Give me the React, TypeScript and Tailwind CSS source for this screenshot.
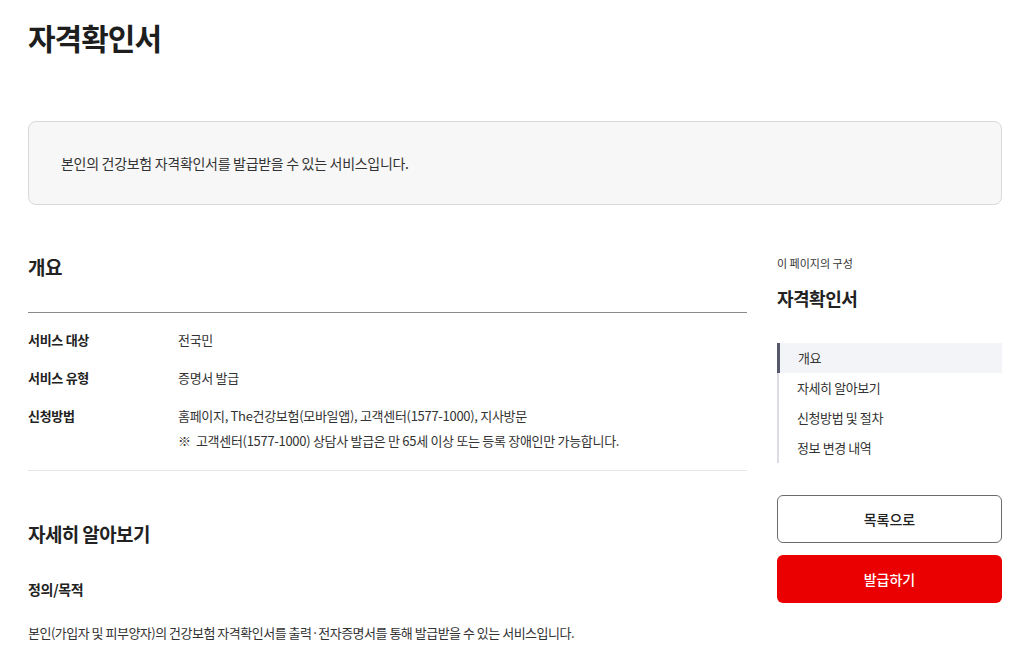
import React from 'react';

const font = { fontFamily: '"Noto Sans CJK KR", "Noto Sans", sans-serif' };

const overviewRows = [
  { label: '서비스 대상', values: ['전국민'] },
  { label: '서비스 유형', values: ['증명서 발급'] },
  {
    label: '신청방법',
    values: [
      '홈페이지, The건강보험(모바일앱), 고객센터(1577-1000), 지사방문',
      '※  고객센터(1577-1000) 상담사 발급은 만 65세 이상 또는 등록 장애인만 가능합니다.',
    ],
  },
];

const navItems = ['개요', '자세히 알아보기', '신청방법 및 절차', '정보 변경 내역'];

export default function App() {
  return (
    <div className="min-h-screen bg-white text-[#222]" style={font}>
      <div className="px-[28px] w-[1030px]">
        <h1 className="pt-[16px] text-[30px] leading-[42px] font-bold tracking-[-1px] text-[#1e1e1e]">
          자격확인서
        </h1>

        <div className="mt-[63px] h-[84px] flex items-center px-[32px] bg-[#f7f7f7] border border-[#d9d9d9] rounded-[8px] text-[14px] tracking-[-0.3px] text-[#333]">
          본인의 건강보험 자격확인서를 발급받을 수 있는 서비스입니다.
        </div>

        <div className="mt-[46px] flex gap-[30px]">
          {/* main column */}
          <div className="w-[719px]">
            <div className="pb-[29px] border-b border-[#8a8a8a]">
              <h2 className="text-[19px] leading-[32px] font-bold tracking-[-0.6px]">개요</h2>
            </div>
            <dl className="pt-[16px] pb-[18px] flex flex-col gap-[16px] border-b border-[#e6e6e6] text-[13px] leading-[22px] tracking-[-0.3px]">
              {overviewRows.map((row) => (
                <div key={row.label} className="flex">
                  <dt className="w-[150px] font-bold text-[#222]">{row.label}</dt>
                  <dd className="flex flex-col gap-[3px] text-[#333]">
                    {row.values.map((v) => (
                      <span key={v} className="whitespace-pre">{v}</span>
                    ))}
                  </dd>
                </div>
              ))}
            </dl>

            <h2 className="mt-[47px] text-[19px] leading-[32px] font-bold tracking-[-0.6px]">자세히 알아보기</h2>
            <h3 className="mt-[28px] text-[14px] leading-[22px] font-bold tracking-[-0.3px]">정의/목적</h3>
            <p className="mt-[22px] text-[13px] leading-[22px] tracking-[-0.5px] text-[#333]">
              본인(가입자 및 피부양자)의 건강보험 자격확인서를 출력·전자증명서를 통해 발급받을 수 있는 서비스입니다.
            </p>
          </div>

          {/* side column */}
          <aside className="w-[225px]">
            <p className="pt-[4px] text-[11px] leading-[16px] text-[#333]">이 페이지의 구성</p>
            <p className="mt-[13px] text-[18px] leading-[28px] font-bold tracking-[-0.5px]">자격확인서</p>
            <ul className="mt-[31px] border-l-2 border-[#dcdde3] text-[13px] tracking-[-0.4px]">
              {navItems.map((item, i) => (
                <li
                  key={item}
                  className={
                    i === 0
                      ? 'h-[30px] flex items-center pl-[18px] -ml-[2px] border-l-[3px] border-[#55596b] bg-[#f3f4f8] text-[#333]'
                      : 'h-[30px] flex items-center pl-[18px] text-[#333]'
                  }
                >
                  {item}
                </li>
              ))}
            </ul>
            <div className="mt-[32px] flex flex-col gap-[12px]">
              <button className="h-[48px] rounded-[6px] border border-[#6b6b6b] bg-white text-[14px] font-medium text-[#222]">
                목록으로
              </button>
              <button className="h-[48px] rounded-[6px] bg-[#ea0000] text-[14px] font-medium text-white">
                발급하기
              </button>
            </div>
          </aside>
        </div>
      </div>
    </div>
  );
}
